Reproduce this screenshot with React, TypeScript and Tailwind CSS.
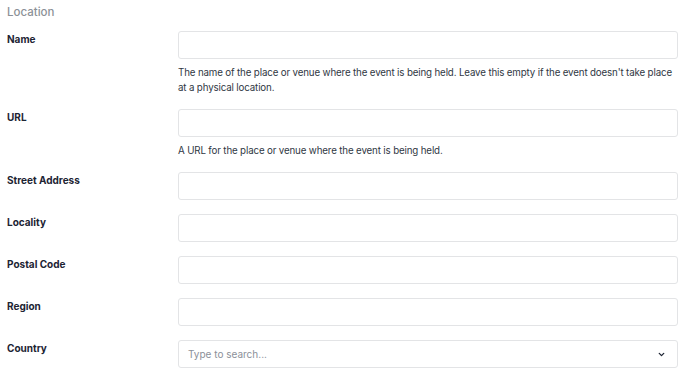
import { ChevronDown } from 'lucide-react';

type Field = {
  label: string;
  help?: string;
  select?: boolean;
};

const fields: Field[] = [
  {
    label: 'Name',
    help: "The name of the place or venue where the event is being held. Leave this empty if the event doesn't take place at a physical location.",
  },
  { label: 'URL', help: 'A URL for the place or venue where the event is being held.' },
  { label: 'Street Address' },
  { label: 'Locality' },
  { label: 'Postal Code' },
  { label: 'Region' },
  { label: 'Country', select: true },
];

export default function App() {
  return (
    <div className="min-h-screen bg-white pl-[7px] pr-[2px] pt-[4px] font-['Inter',sans-serif] text-[#1e2939]">
      <h2 className="mb-[11px] text-[11.5px] font-medium leading-[16px] text-[#8c9197]">Location</h2>

      <div className="flex flex-col gap-[14px]">
        {fields.map((field) => (
          <div key={field.label} className="flex">
            <label className="w-[171px] shrink-0 pt-[1px] text-[10px] font-bold leading-[15px] text-[#1d2433]">
              {field.label}
            </label>
            <div className="min-w-0 flex-1">
              {field.select ? (
                <div className="flex h-[28px] items-center justify-between rounded-[3px] border border-[#e3e4e6] bg-white pl-[9px] pr-[11px]">
                  <span className="text-[10px] text-[#8b9099]">Type to search...</span>
                  <ChevronDown className="h-[9px] w-[9px] text-[#1d2433]" strokeWidth={3.5} />
                </div>
              ) : (
                <input
                  type="text"
                  className="block h-[28px] w-full rounded-[3px] border border-[#e3e4e6] bg-white px-[9px] text-[10px] outline-none"
                />
              )}
              {field.help && (
                <p className="mt-[6px] text-[9.75px] leading-[15px] tracking-[-0.15px] text-[#2f3743]">{field.help}</p>
              )}
            </div>
          </div>
        ))}
      </div>
    </div>
  );
}
